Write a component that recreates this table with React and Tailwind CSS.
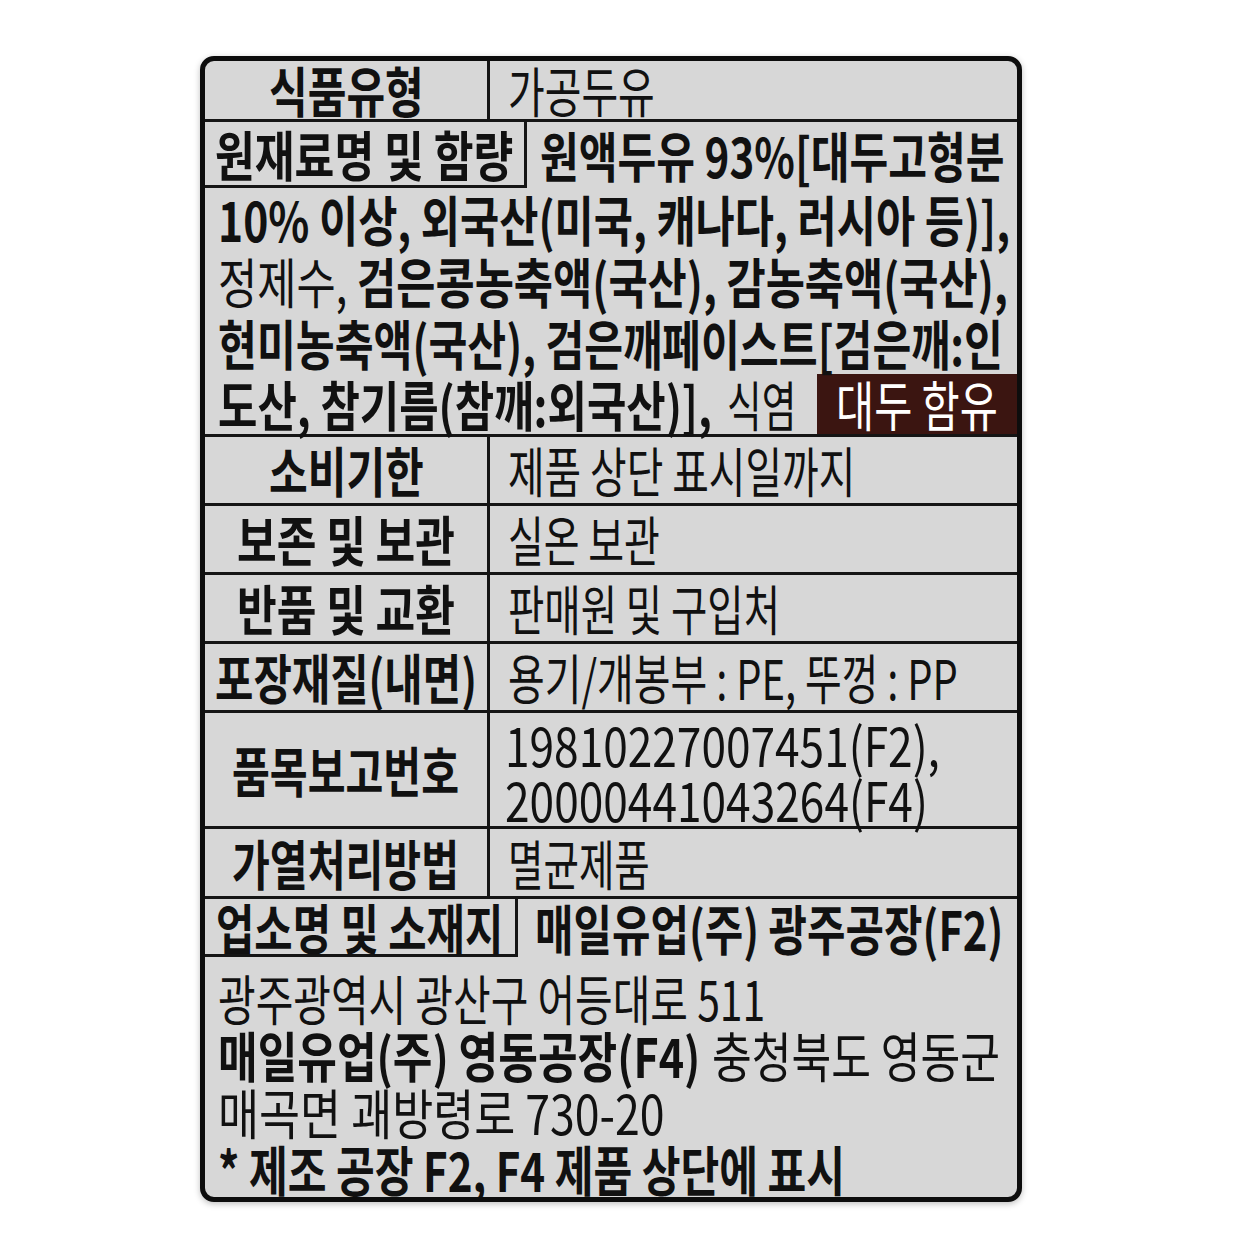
import { useLayoutEffect, useRef, useState } from 'react';
import clsx from 'clsx';

// squeeze a line of text horizontally so it spans exactly `w` pixels
function Fit({ w, className, children }) {
  const ref = useRef(null);
  const [m, setM] = useState({ s: 1, gap: 0 });

  useLayoutEffect(() => {
    const measure = () => {
      const el = ref.current;
      if (!el || !el.offsetWidth) return;
      setM({ s: w / el.offsetWidth, gap: w - el.offsetWidth });
    };
    measure();
    if (document.fonts) document.fonts.ready.then(measure);
  }, [w]);

  return (
    <span
      ref={ref}
      className={clsx('inline-block shrink-0 origin-left whitespace-nowrap leading-none', className)}
      style={{ transform: `scaleX(${m.s})`, marginRight: m.gap }}
    >
      {children}
    </span>
  );
}

function Row({ h, label, lw, children }) {
  return (
    <div className={clsx('flex border-b-[3px] border-[#151515]', h)}>
      <div className="flex w-[285px] shrink-0 items-center justify-center border-r-[3px] border-[#151515]">
        <Fit w={lw} className="font-bold">
          {label}
        </Fit>
      </div>
      <div className="flex flex-1 items-center pl-[18px]">{children}</div>
    </div>
  );
}

export default function App() {
  return (
    <div className="min-h-screen bg-white pl-[200px] pt-[56px] font-['Noto_Sans_CJK_KR',sans-serif] text-[54px] text-[#111]">
      <div className="flex h-[1146px] w-[822px] flex-col overflow-hidden rounded-[14px] border-[5px] border-[#0d0d0d] bg-[#d7d7d7] shadow-[0_2px_6px_rgba(0,0,0,0.25)]">
        <Row h="h-[61px]" label="식품유형" lw={155}>
          <Fit w={147}>가공두유</Fit>
        </Row>

        {/* 원재료명 및 함량 */}
        <div className="flex h-[315px] flex-col border-b-[3px] border-[#151515]">
          <div className="flex h-[66px]">
            <div className="flex w-[322px] shrink-0 items-center justify-center border-b-[3px] border-r-[3px] border-[#151515]">
              <Fit w={298} className="font-bold">
                원재료명 및 함량
              </Fit>
            </div>
            <div className="flex flex-1 items-center pl-[13px]">
              <Fit w={465} className="font-bold">
                원액두유 93%[대두고형분
              </Fit>
            </div>
          </div>
          <div className="flex flex-1 flex-col pl-[13px]">
            <div className="flex h-[62px] items-center">
              <Fit w={792} className="font-bold">
                10% 이상, 외국산(미국, 캐나다, 러시아 등)],
              </Fit>
            </div>
            <div className="flex h-[62px] items-center">
              <Fit w={790}>
                <span className="font-normal">정제수, </span>
                <span className="font-bold">검은콩농축액(국산), 감농축액(국산),</span>
              </Fit>
            </div>
            <div className="flex h-[62px] items-center">
              <Fit w={785} className="font-bold">
                현미농축액(국산), 검은깨페이스트[검은깨:인
              </Fit>
            </div>
            <div className="flex flex-1 items-center">
              <Fit w={494} className="font-bold">
                도산, 참기름(참깨:외국산)],
              </Fit>
              <span className="ml-[15px] flex">
                <Fit w={69}>식염</Fit>
              </span>
              <div className="ml-auto flex h-full w-[200px] shrink-0 items-center justify-center bg-[#3b1511] text-white">
                <Fit w={162}>대두 함유</Fit>
              </div>
            </div>
          </div>
        </div>

        <Row h="h-[69px]" label="소비기한" lw={155}>
          <Fit w={347}>제품 상단 표시일까지</Fit>
        </Row>
        <Row h="h-[69px]" label="보존 및 보관" lw={218}>
          <Fit w={152}>실온 보관</Fit>
        </Row>
        <Row h="h-[69px]" label="반품 및 교환" lw={218}>
          <Fit w={272}>판매원 및 구입처</Fit>
        </Row>
        <Row h="h-[69px]" label="포장재질(내면)" lw={262}>
          <Fit w={450}>용기/개봉부 : PE, 뚜껑 : PP</Fit>
        </Row>

        <div className="flex h-[116px] border-b-[3px] border-[#151515]">
          <div className="flex w-[285px] shrink-0 items-center justify-center border-r-[3px] border-[#151515]">
            <Fit w={227} className="font-bold">
              품목보고번호
            </Fit>
          </div>
          <div className="flex flex-1 flex-col pl-[15px] pt-[4px]">
            <div className="flex h-[56px] items-center">
              <Fit w={435}>19810227007451(F2),</Fit>
            </div>
            <div className="flex h-[56px] items-center">
              <Fit w={423}>20000441043264(F4)</Fit>
            </div>
          </div>
        </div>

        <Row h="h-[70px]" label="가열처리방법" lw={227}>
          <Fit w={142}>멸균제품</Fit>
        </Row>

        {/* 업소명 및 소재지 */}
        <div className="flex flex-1 flex-col">
          <div className="flex h-[58px]">
            <div className="flex w-[313px] shrink-0 items-center justify-center border-b-[3px] border-r-[3px] border-[#151515]">
              <Fit w={287} className="font-bold">
                업소명 및 소재지
              </Fit>
            </div>
            <div className="flex flex-1 items-center pl-[17px]">
              <Fit w={468} className="font-bold">
                매일유업(주) 광주공장(F2)
              </Fit>
            </div>
          </div>
          <div className="flex flex-col pl-[13px] pt-[12px]">
            <div className="flex h-[57px] items-center">
              <Fit w={547}>광주광역시 광산구 어등대로 511</Fit>
            </div>
            <div className="flex h-[57px] items-center">
              <Fit w={482} className="font-bold">
                매일유업(주) 영동공장(F4)
              </Fit>
              <span className="ml-[12px] flex">
                <Fit w={288}>충청북도 영동군</Fit>
              </span>
            </div>
            <div className="flex h-[57px] items-center">
              <Fit w={447}>매곡면 괘방령로 730-20</Fit>
            </div>
            <div className="flex h-[57px] items-center">
              <Fit w={627} className="font-bold">
                * 제조 공장 F2, F4 제품 상단에 표시
              </Fit>
            </div>
          </div>
        </div>
      </div>
    </div>
  );
}
